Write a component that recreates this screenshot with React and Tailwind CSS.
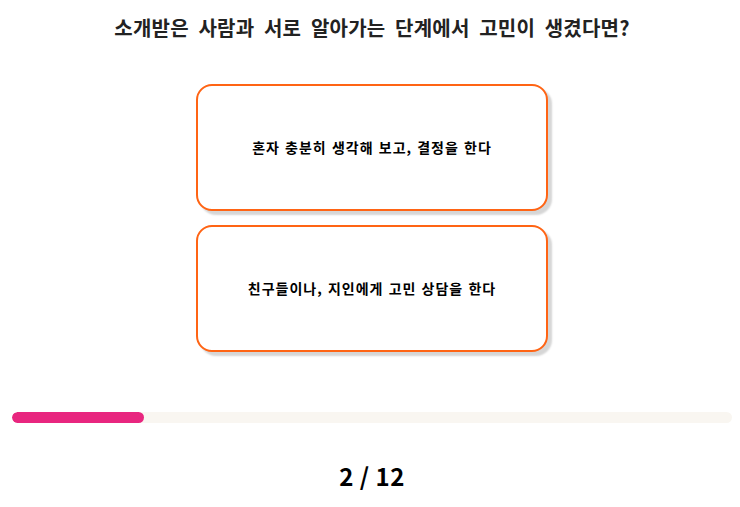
import React from 'react';

const choices = [
  '혼자 충분히 생각해 보고, 결정을 한다',
  '친구들이나, 지인에게 고민 상담을 한다',
];

const App = () => {
  const current = 2;
  const total = 12;

  return (
    <div
      className="w-[740px] h-[507px] bg-white flex flex-col items-center overflow-hidden"
      style={{ fontFamily: '"Noto Sans CJK KR", "Noto Sans", sans-serif' }}
    >
      {/* Question */}
      <h1 className="mt-[13px] text-[20px] leading-[30px] font-bold text-[#222] pl-[4px] [word-spacing:5px] tracking-[0.2px]">
        소개받은 사람과 서로 알아가는 단계에서 고민이 생겼다면?
      </h1>

      {/* Answers */}
      <div className="mt-[41px] flex flex-col gap-[14px] pl-[4px]">
        {choices.map(c => (
          <button
            key={c}
            className="w-[352px] h-[127px] bg-white border-2 border-[#ff6414] rounded-[16px] shadow-[4px_4px_2px_#d6d6d6] flex items-center justify-center text-[14px] font-bold text-black tracking-[1px] [word-spacing:1px]"
          >
            {c}
          </button>
        ))}
      </div>

      {/* Progress */}
      <div className="mt-[60px] self-start ml-[12px] w-[720px] h-[11px] rounded-full bg-[#f9f6f1] overflow-hidden">
        <div className="h-full w-[132px] rounded-full bg-[#e8267f]" />
      </div>

      <div className="mt-[37px] text-[24px] leading-[32px] font-bold text-black pl-[4px] tracking-[0.5px]">
        {current} / {total}
      </div>
    </div>
  );
};

export default App;
